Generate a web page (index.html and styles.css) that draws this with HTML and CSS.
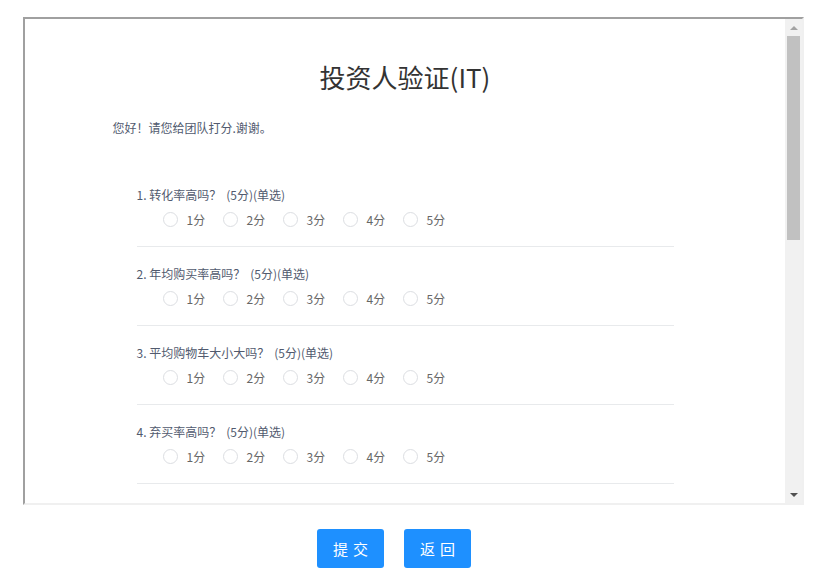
FILE: index.html
```html
<!DOCTYPE html>
<html lang="zh">
<head>
<meta charset="utf-8">
<title>投资人验证(IT)</title>
<link rel="stylesheet" href="styles.css">
</head>
<body>
<div class="frame">
  <div class="content">
    <h1 class="title">投资人验证(IT)</h1>
    <div class="form">
      <p class="greeting">您好！请您给团队打分.谢谢。</p>
      <div class="question">
        <div class="q-label">1. 转化率高吗？<span class="q-meta">(5分)(单选)</span></div>
        <div class="options">
          <label class="opt"><span class="radio"></span>1分</label>
          <label class="opt"><span class="radio"></span>2分</label>
          <label class="opt"><span class="radio"></span>3分</label>
          <label class="opt"><span class="radio"></span>4分</label>
          <label class="opt"><span class="radio"></span>5分</label>
        </div>
      </div>
      <div class="question">
        <div class="q-label">2. 年均购买率高吗？<span class="q-meta">(5分)(单选)</span></div>
        <div class="options">
          <label class="opt"><span class="radio"></span>1分</label>
          <label class="opt"><span class="radio"></span>2分</label>
          <label class="opt"><span class="radio"></span>3分</label>
          <label class="opt"><span class="radio"></span>4分</label>
          <label class="opt"><span class="radio"></span>5分</label>
        </div>
      </div>
      <div class="question">
        <div class="q-label">3. 平均购物车大小大吗？<span class="q-meta">(5分)(单选)</span></div>
        <div class="options">
          <label class="opt"><span class="radio"></span>1分</label>
          <label class="opt"><span class="radio"></span>2分</label>
          <label class="opt"><span class="radio"></span>3分</label>
          <label class="opt"><span class="radio"></span>4分</label>
          <label class="opt"><span class="radio"></span>5分</label>
        </div>
      </div>
      <div class="question">
        <div class="q-label">4. 弃买率高吗？<span class="q-meta">(5分)(单选)</span></div>
        <div class="options">
          <label class="opt"><span class="radio"></span>1分</label>
          <label class="opt"><span class="radio"></span>2分</label>
          <label class="opt"><span class="radio"></span>3分</label>
          <label class="opt"><span class="radio"></span>4分</label>
          <label class="opt"><span class="radio"></span>5分</label>
        </div>
      </div>
    </div>
  </div>
  <div class="scrollbar">
    <div class="arrow arrow-up"></div>
    <div class="track"><div class="thumb"></div></div>
    <div class="arrow arrow-down"></div>
  </div>
</div>
<div class="actions">
  <button class="btn">提交</button>
  <button class="btn">返回</button>
</div>
</body>
</html>
```

FILE: styles.css
```css
* { box-sizing: border-box; }
html, body {
  margin: 0;
  padding: 0;
  background: #fff;
  font-family: "Noto Sans CJK SC", "Microsoft YaHei", "Noto Sans", sans-serif;
}
.frame {
  margin: 17px 0 0 23px;
  width: 781px;
  height: 488px;
  border-style: solid;
  border-width: 2px;
  border-color: #a0a0a0 #f0f0f0 #f0f0f0 #a0a0a0;
  display: flex;
  overflow: hidden;
}
.content {
  flex: 1;
  overflow: hidden;
  padding-top: 40px;
}
.title {
  margin: 0;
  text-align: center;
  font-size: 26px;
  line-height: 36px;
  font-weight: normal;
  color: #333;
}
.form {
  width: 585px;
  margin: 0 auto;
}
.greeting {
  margin: 23px 0 0;
  font-size: 12px;
  line-height: 20px;
  color: #515a6e;
}
.question {
  margin: 0 24px;
  padding: 17px 0 16px;
  border-bottom: 1px solid #e8eaec;
}
.greeting + .question { margin-top: 30px; }
.q-label {
  font-size: 12px;
  line-height: 20px;
  color: #515a6e;
}
.q-meta { margin-left: 5px; }
.options {
  display: flex;
  margin-top: 4px;
  padding-left: 26px;
  height: 21px;
}
.opt {
  width: 60px;
  display: flex;
  align-items: center;
  gap: 9px;
  font-size: 12px;
  color: #666;
}
.radio {
  width: 15px;
  height: 15px;
  border: 1px solid #dcdee2;
  border-radius: 50%;
  background: #fff;
}
.scrollbar {
  width: 17px;
  background: #f1f1f1;
  display: flex;
  flex-direction: column;
}
.arrow {
  height: 17px;
  display: flex;
  align-items: center;
  justify-content: center;
}
.arrow::before {
  content: "";
  width: 0;
  height: 0;
  border-left: 4px solid transparent;
  border-right: 4px solid transparent;
}
.arrow-up::before { border-bottom: 4px solid #a3a3a3; }
.arrow-down::before { border-top: 4px solid #505050; }
.track {
  flex: 1;
  padding: 0 2px;
}
.thumb {
  height: 204px;
  background: #c1c1c1;
}
.actions {
  display: flex;
  gap: 20px;
  padding-left: 317px;
  margin-top: 24px;
}
.btn {
  width: 67px;
  height: 39px;
  border: none;
  border-radius: 3px;
  background: #1e90ff;
  color: #fff;
  font-family: inherit;
  font-size: 15px;
  letter-spacing: 5px;
  text-indent: 5px;
  cursor: pointer;
}
```
